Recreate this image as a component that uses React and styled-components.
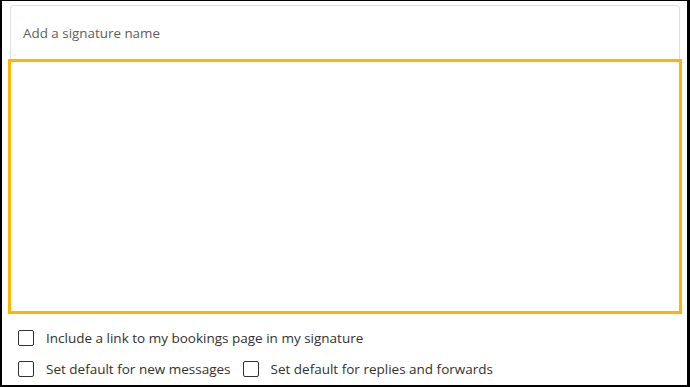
import React from "react";
import styled, { createGlobalStyle } from "styled-components";

const GlobalStyle = createGlobalStyle`
	html, body {
		margin: 0;
		padding: 0;
		background: #000;
	}
	body {
		font-family: "Segoe UI", "Open Sans", sans-serif;
	}
`;

const App = () => {
	return (
		<>
			<GlobalStyle />
			<StyledPage>
				<StyledFrame>
					<StyledNameInput placeholder="Add a signature name" />
					<StyledEditor />
				</StyledFrame>
				<StyledOptions>
					<StyledRow>
						<Check label="Include a link to my bookings page in my signature" />
					</StyledRow>
					<StyledRow>
						<Check label="Set default for new messages" />
						<Check label="Set default for replies and forwards" />
					</StyledRow>
				</StyledOptions>
			</StyledPage>
		</>
	);
};

const Check = ({ label }) => (
	<StyledCheck>
		<input type="checkbox" />
		<span className="box" />
		<span>{label}</span>
	</StyledCheck>
);

export default App;

const StyledPage = styled.div`
	background: #fff;
	margin: 1px 3px 0 2px;
	height: 384px;
	box-sizing: border-box;
	padding: 4px 8px 0 8px;
`;

const StyledFrame = styled.div`
	border: 1px solid #e1dfdd;
	border-bottom: none;
	border-radius: 4px 4px 0 0;
	width: 670px;
	box-sizing: border-box;
`;

const StyledNameInput = styled.input`
	display: block;
	width: 100%;
	height: 53px;
	box-sizing: border-box;
	border: none;
	outline: none;
	padding: 1px 12px 0;
	font-family: inherit;
	font-size: 13.4px;
	color: #323130;
	background: transparent;

	&::placeholder {
		color: #605e5c;
	}
`;

const StyledEditor = styled.div`
	margin: 0 -3px 0 -3px;
	height: 255px;
	box-sizing: border-box;
	border: 3px solid #ffb400;
`;

const StyledOptions = styled.div`
	display: flex;
	flex-direction: column;
	gap: 12px;
	padding: 14px 0 0 8px;
`;

const StyledRow = styled.div`
	display: flex;
	gap: 12px;
	height: 19px;
	align-items: center;
`;

const StyledCheck = styled.label`
	display: flex;
	align-items: center;
	gap: 12px;
	font-size: 13.5px;
	color: #323130;
	cursor: pointer;

	input {
		display: none;
	}

	.box {
		width: 16px;
		height: 16px;
		box-sizing: border-box;
		border: 1px solid #323130;
		border-radius: 2px;
		flex-shrink: 0;
	}
`;
